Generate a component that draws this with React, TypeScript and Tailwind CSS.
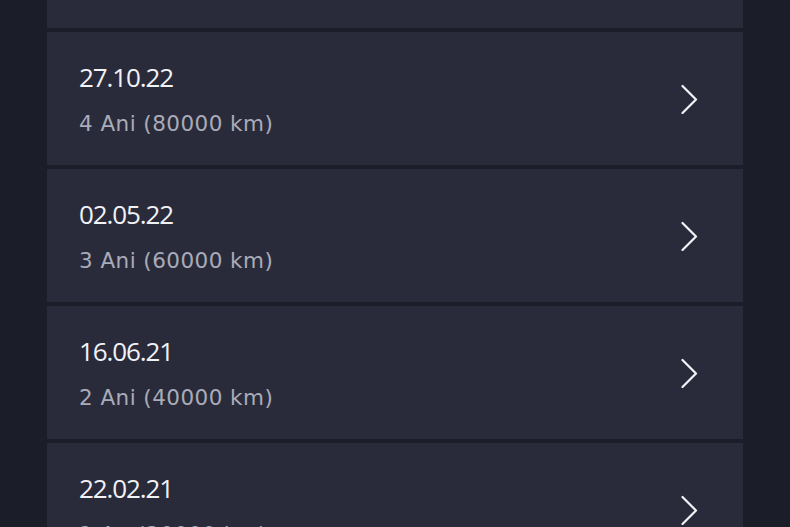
import React from "react";

const items = [
  { date: "14.03.23", sub: "5 Ani (100000 km)" },
  { date: "27.10.22", sub: "4 Ani (80000 km)" },
  { date: "02.05.22", sub: "3 Ani (60000 km)" },
  { date: "16.06.21", sub: "2 Ani (40000 km)" },
  { date: "22.02.21", sub: "1 An (20000 km)" },
];

function Chevron() {
  return (
    <svg width="18" height="30" viewBox="0 0 18 30" fill="none" className="shrink-0">
      <path d="M2.5 2 L16 15.5 L2.5 29" stroke="#f2f3f7" strokeWidth="2.2" strokeLinecap="round" strokeLinejoin="round" />
    </svg>
  );
}

export default function App() {
  return (
    <div className="h-[527px] w-[790px] overflow-hidden bg-[#1b1d28]">
      <div className="mx-[47px] -mt-[105px] flex flex-col gap-[4px]">
        {items.map((it) => (
          <div
            key={it.date}
            className="flex h-[133px] shrink-0 items-center justify-between bg-[#292b3b] pl-[32px] pr-[45px]"
          >
            <div className="flex flex-col self-start pt-[27px]">
              <div
                className="text-[26px] font-normal leading-[36px] tracking-[-1.1px] text-[#f1f2f6]"
                style={{ fontFamily: "'Open Sans', Lato, sans-serif" }}
              >
                {it.date}
              </div>
              <div
                className="mt-[15px] text-[21.5px] leading-[28px] tracking-[0.45px] text-[#a9abb8]"
                style={{ fontFamily: "'DejaVu Sans', 'Noto Sans', sans-serif" }}
              >
                {it.sub}
              </div>
            </div>
            <Chevron />
          </div>
        ))}
      </div>
    </div>
  );
}
